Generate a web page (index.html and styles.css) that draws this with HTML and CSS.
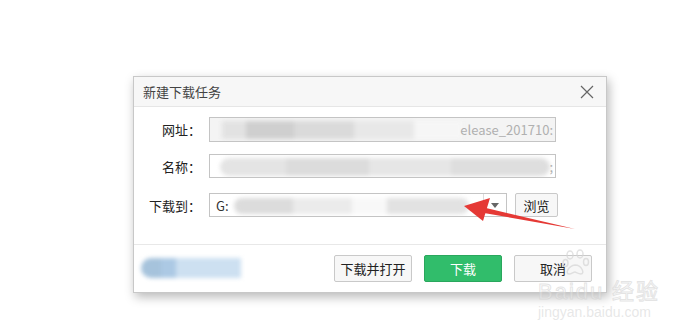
FILE: index.html
```html
<!DOCTYPE html>
<html lang="zh-CN">
<head>
    <meta charset="UTF-8">
    <title>新建下载任务</title>
    <link rel="stylesheet" href="styles.css">
</head>
<body>
    <div class="dialog">
        <div class="dialog-header">
            <span class="title">新建下载任务</span>
            <svg class="close" width="14" height="14" viewBox="0 0 14 14">
                <path d="M1 1 L13 13 M13 1 L1 13" stroke="#666" stroke-width="1.2" fill="none"/>
            </svg>
        </div>

        <div class="dialog-body">
            <div class="row row-url">
                <label>网址：</label>
                <div class="field field-disabled">
                    <span class="blur blur-url"></span>
                    <span class="field-text">elease_201710:</span>
                </div>
            </div>
            <div class="row row-name">
                <label>名称：</label>
                <div class="field">
                    <span class="blur blur-name"></span>
                    <span class="field-text">;</span>
                </div>
            </div>
            <div class="row row-path">
                <label>下载到：</label>
                <div class="select">
                    <span class="select-text">G:</span>
                    <span class="blur blur-path"></span>
                    <span class="select-arrow">
                        <svg width="8" height="5" viewBox="0 0 8 5"><path d="M0 0 L8 0 L4 5 Z" fill="#666"/></svg>
                    </span>
                </div>
                <button class="btn btn-small">浏览</button>
            </div>
        </div>

        <div class="dialog-footer">
            <span class="blur blur-user"></span>
            <div class="actions">
                <button class="btn">下载并打开</button>
                <button class="btn btn-primary">下载</button>
                <button class="btn">取消</button>
            </div>
        </div>
    </div>

    <!-- annotation arrow drawn over the screenshot -->
    <svg class="arrow" width="688" height="329" viewBox="0 0 688 329">
        <path d="M575 229 L486 208 L484 213 Z" fill="#e53935"/>
        <path d="M464 206 L490 198 L483 221 Z" fill="#e53935"/>
    </svg>

    <!-- faint site watermark -->
    <svg class="paw" width="30" height="28" viewBox="0 0 30 28">
        <g fill="none" stroke="#d6d6d6" stroke-width="1.5">
            <ellipse cx="8" cy="6" rx="3" ry="4"/>
            <ellipse cx="18" cy="5" rx="3" ry="4"/>
            <ellipse cx="3.5" cy="14" rx="2.5" ry="3.5"/>
            <ellipse cx="24" cy="13" rx="2.5" ry="3.5"/>
            <path d="M7 25 C3 25 6 17 13 16 C20 16 23 25 19 25 C16 25 14 23 13 23 C11 23 10 25 7 25 Z"/>
        </g>
    </svg>
    <div class="watermark">
        <div class="wm-logo">Baidu 经验</div>
        <div class="wm-url">jingyan.baidu.com</div>
    </div>
</body>
</html>
```

FILE: styles.css
```css
body {
    margin: 0;
    background: #fff;
    font-family: "Noto Sans CJK SC", "Liberation Sans", sans-serif;
    font-size: 13px;
    color: #333;
    width: 688px;
    height: 329px;
    overflow: hidden;
    position: relative;
}

.dialog {
    margin: 76px 0 0 133px;
    width: 472px;
    height: 215px;
    border: 1px solid #c8c8c8;
    background: #fff;
    box-shadow: 2px 4px 10px rgba(0, 0, 0, 0.28);
    display: flex;
    flex-direction: column;
}

.dialog-header {
    height: 29px;
    border-bottom: 1px solid #e6e6e6;
    background: #f7f7f7;
    display: flex;
    align-items: center;
    justify-content: space-between;
    padding: 0 12px 0 9px;
}

.title {
    color: #444;
    font-size: 13px;
}

.dialog-body {
    padding: 10px 0 0;
    flex: 1;
}

.row {
    display: flex;
    align-items: center;
}

.row-url {
    height: 25px;
}

.row-name {
    height: 24px;
    margin-top: 12px;
}

.row-path {
    height: 24px;
    margin-top: 15px;
}

.row label {
    width: 67px;
    text-align: right;
    margin-right: 8px;
    color: #222;
}

.field {
    position: relative;
    width: 347px;
    height: 100%;
    box-sizing: border-box;
    border: 1px solid #c4c4c4;
    background: #fff;
    overflow: hidden;
    display: flex;
    align-items: center;
    justify-content: flex-end;
}

.field-disabled {
    background: #f4f4f4;
}

.field-text {
    color: #b0b0b0;
    padding-right: 2px;
    position: relative;
}

.blur {
    position: absolute;
    filter: blur(2px);
}

.blur-url {
    left: 12px;
    top: 3px;
    width: 240px;
    height: 18px;
    background: linear-gradient(90deg, #e2e2e2 0 10%, #cfcfcf 10% 30%, #dadada 30% 55%, #e8e8e8 55% 80%, #f6f6f6 80%);
}

.blur-name {
    left: 10px;
    top: 3px;
    width: 330px;
    height: 18px;
    background: linear-gradient(90deg, #e4e4e4 0 20%, #dcdcdc 20% 45%, #e6e6e6 45% 70%, #dedede 70% 100%);
    border-radius: 10px;
}

.select {
    position: relative;
    width: 298px;
    height: 100%;
    box-sizing: border-box;
    border: 1px solid #c4c4c4;
    display: flex;
    align-items: center;
    overflow: hidden;
}

.select-text {
    padding-left: 6px;
    color: #333;
}

.blur-path {
    left: 24px;
    top: 4px;
    width: 235px;
    height: 16px;
    background: linear-gradient(90deg, #dcdcdc 0 25%, #ebebeb 25% 50%, #f8f8f8 50% 65%, #e2e2e2 65% 100%);
    border-radius: 8px;
}

.select-arrow {
    margin-left: auto;
    width: 22px;
    height: 100%;
    border-left: 1px solid #dcdcdc;
    display: flex;
    align-items: center;
    justify-content: center;
}

.btn {
    font-family: inherit;
    font-size: 13px;
    color: #222;
    background: #f7f7f7;
    border: 1px solid #c9c9c9;
    border-radius: 2px;
    width: 78px;
    height: 27px;
    padding: 0;
}

.btn-small {
    width: 43px;
    height: 24px;
    margin-left: 8px;
}

.btn-primary {
    background: #31bd6b;
    border-color: #2aa75d;
    color: #fff;
}

.dialog-footer {
    border-top: 1px solid #e8e8e8;
    height: 48px;
    box-sizing: border-box;
    padding: 10px 14px 0 7px;
    display: flex;
    align-items: flex-start;
    justify-content: space-between;
    position: relative;
}

.blur-user {
    position: static;
    margin-top: 3px;
    width: 100px;
    height: 20px;
    border-radius: 10px 0 0 10px;
    background: linear-gradient(90deg, #a6c3dc 0 20%, #acc9e4 20% 35%, #cde0f1 35% 100%);
}

.actions {
    display: flex;
    gap: 12px;
}

.arrow {
    position: absolute;
    left: 0;
    top: 0;
    pointer-events: none;
}

.paw {
    position: absolute;
    left: 562px;
    top: 249px;
    opacity: 0.7;
}

.watermark {
    position: absolute;
    left: 538px;
    top: 282px;
    font-family: "Liberation Sans", sans-serif;
    pointer-events: none;
}

.wm-logo {
    font-size: 22px;
    line-height: 20px;
    letter-spacing: 2px;
    color: rgba(255, 255, 255, 0.3);
    -webkit-text-stroke: 1px rgba(205, 205, 205, 0.55);
}

.wm-url {
    font-size: 14px;
    line-height: 16px;
    margin-top: 2px;
    color: rgba(215, 215, 215, 0.6);
}
```
